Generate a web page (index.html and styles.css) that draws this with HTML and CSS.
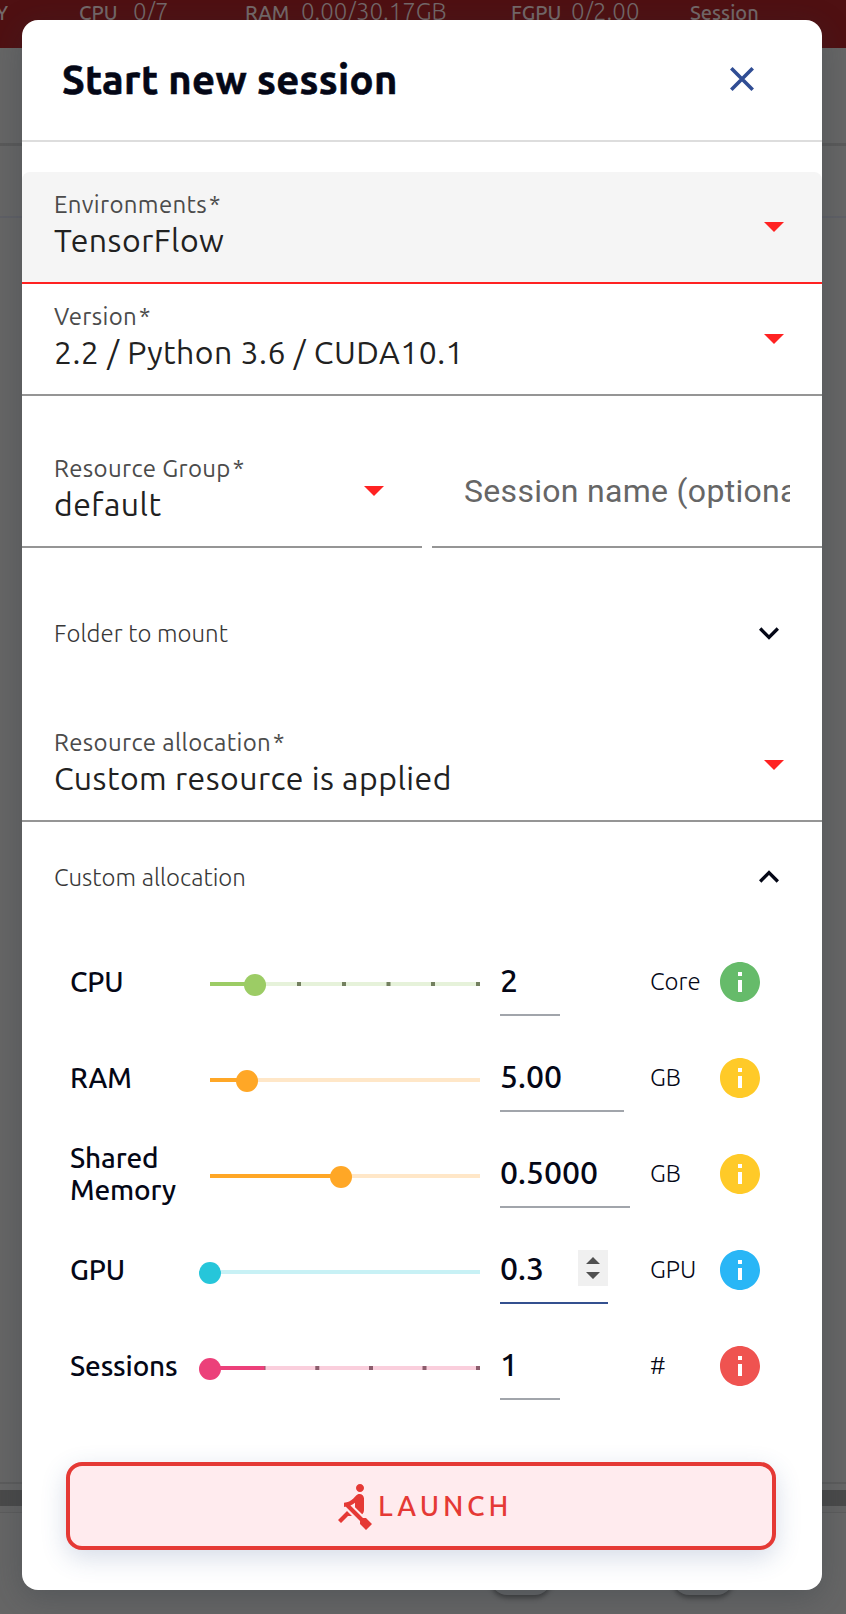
FILE: index.html
```
<!DOCTYPE html>
<html lang="en">
<head>
<meta charset="utf-8">
<title>Start new session</title>
<link rel="stylesheet" href="styles.css">
</head>
<body>
<div class="page">
  <header class="statusbar">
    <span class="stat-name">Y</span>
    <span class="stat-name">CPU</span><span class="stat-value">0/7</span>
    <span class="stat-name">RAM</span><span class="stat-value">0.00/30.17GB</span>
    <span class="stat-name">FGPU</span><span class="stat-value">0/2.00</span>
    <span class="stat-name">Session</span>
  </header>
  <div class="page-tabs"></div>
  <div class="page-head"></div>
  <div class="page-list"></div>
  <div class="page-divider"></div>
  <div class="page-footer"><i></i><i></i></div>
</div>

<main class="dialog">
  <div class="dialog-head">
    <h1>Start new session</h1>
    <svg class="close" viewBox="0 0 24 24"><path d="M1.3 1.3 22.7 22.7M22.7 1.3 1.3 22.7"/></svg>
  </div>

  <section class="fields">
    <div class="field active">
      <div class="field-text"><label>Environments<b>*</b></label><div class="value">TensorFlow</div></div>
      <svg class="caret" viewBox="0 0 20 10"><path d="M0 0h20L10 10z"/></svg>
    </div>
    <div class="field">
      <div class="field-text"><label>Version<b>*</b></label><div class="value">2.2 / Python 3.6 / CUDA10.1</div></div>
      <svg class="caret" viewBox="0 0 20 10"><path d="M0 0h20L10 10z"/></svg>
    </div>
  </section>

  <section class="pair">
    <div class="field">
      <div class="field-text"><label>Resource Group<b>*</b></label><div class="value">default</div></div>
      <svg class="caret" viewBox="0 0 20 10"><path d="M0 0h20L10 10z"/></svg>
    </div>
    <div class="field name-field"><div class="placeholder">Session name (optional)</div></div>
  </section>

  <div class="expander mount"><span>Folder to mount</span>
    <svg viewBox="0 0 24 24"><path d="M16.59 8.59 12 13.17 7.41 8.59 6 10l6 6 6-6z"/></svg></div>

  <div class="field">
    <div class="field-text"><label>Resource allocation<b>*</b></label><div class="value">Custom resource is applied</div></div>
    <svg class="caret" viewBox="0 0 20 10"><path d="M0 0h20L10 10z"/></svg>
  </div>

  <div class="expander custom"><span>Custom allocation</span>
    <svg viewBox="0 0 24 24"><path d="M12 8l-6 6 1.41 1.41L12 10.83l4.59 4.58L18 14z"/></svg></div>

  <section class="rows">
    <div class="row">
      <div class="name">CPU</div>
      <svg class="slider green" viewBox="0 0 292 24"><path class="track" d="M11 11h270"/><path class="fill" d="M11 11h45"/><path class="tick" d="M98 11h4M143 11h4M187.500 11h4M232 11h4M277 11h4"/><circle cx="56" cy="12" r="11"/></svg>
      <div class="amount w60">2</div>
      <div class="unit">Core</div>
      <svg class="info c-green" viewBox="0 0 24 24"><path d="M12 2C6.480 2 2 6.480 2 12s4.480 10 10 10 10-4.480 10-10S17.520 2 12 2zm1 15h-2v-6h2v6zm0-8h-2V7h2v2z"/></svg>
    </div>
    <div class="row">
      <div class="name">RAM</div>
      <svg class="slider orange" viewBox="0 0 292 24"><path class="track" d="M11 11h270"/><path class="fill" d="M11 11h37"/><circle cx="48" cy="12" r="11"/></svg>
      <div class="amount w124">5.00</div>
      <div class="unit">GB</div>
      <svg class="info c-yellow" viewBox="0 0 24 24"><path d="M12 2C6.480 2 2 6.480 2 12s4.480 10 10 10 10-4.480 10-10S17.520 2 12 2zm1 15h-2v-6h2v6zm0-8h-2V7h2v2z"/></svg>
    </div>
    <div class="row">
      <div class="name">Shared Memory</div>
      <svg class="slider orange" viewBox="0 0 292 24"><path class="track" d="M11 11h270"/><path class="fill" d="M11 11h131"/><circle cx="142" cy="12" r="11"/></svg>
      <div class="amount w130">0.5000</div>
      <div class="unit">GB</div>
      <svg class="info c-yellow" viewBox="0 0 24 24"><path d="M12 2C6.480 2 2 6.480 2 12s4.480 10 10 10 10-4.480 10-10S17.520 2 12 2zm1 15h-2v-6h2v6zm0-8h-2V7h2v2z"/></svg>
    </div>
    <div class="row">
      <div class="name">GPU</div>
      <svg class="slider cyan" viewBox="0 0 292 24"><path class="track" d="M11 11h270"/><circle cx="11" cy="12" r="11"/></svg>
      <div class="amount w108 focused"><span>0.3</span>
        <svg class="spinner" viewBox="0 0 30 36"><path d="M8 14l7-7 7 7zM8 22l7 7 7-7z"/></svg></div>
      <div class="unit">GPU</div>
      <svg class="info c-blue" viewBox="0 0 24 24"><path d="M12 2C6.480 2 2 6.480 2 12s4.480 10 10 10 10-4.480 10-10S17.520 2 12 2zm1 15h-2v-6h2v6zm0-8h-2V7h2v2z"/></svg>
    </div>
    <div class="row">
      <div class="name">Sessions</div>
      <svg class="slider pink" viewBox="0 0 292 24"><path class="track" d="M11 11h270"/><path class="tick" d="M62.500 11h4M116.300 11h4M170 11h4M223.500 11h4M277 11h4"/><path class="fill" d="M11 11h54.500"/><circle cx="11" cy="12" r="11"/></svg>
      <div class="amount w60">1</div>
      <div class="unit">#</div>
      <svg class="info c-red" viewBox="0 0 24 24"><path d="M12 2C6.480 2 2 6.480 2 12s4.480 10 10 10 10-4.480 10-10S17.520 2 12 2zm1 15h-2v-6h2v6zm0-8h-2V7h2v2z"/></svg>
    </div>
  </section>

  <button class="launch">
    <svg viewBox="0 0 24 24"><path d="M8.500 14.500L4 19l1.500 1.500L9 17h2l-2.500-2.500zM15 1c-1.100 0-2 .9-2 2s.9 2 2 2 2-.9 2-2-.9-2-2-2zm6 20.010L18 24l-2.990-3.010V19.500l-7.100-7.090c-.31.050-.61.070-.91.070v-2.160c1.660.03 3.610-.87 4.670-2.040l1.400-1.550c.19-.21.43-.38.69-.5.29-.14.62-.23.96-.23h.03C15.990 6.010 17 7.020 17 8.260v5.750c0 .84-.35 1.610-.92 2.160l-3.580-3.580v-2.270c-.63.52-1.430 1.020-2.290 1.390L16.500 18H18l3 3.010z"/></svg>
    <span>LAUNCH</span>
  </button>
</main>
</body>
</html>
```
FILE: styles.css
```
* { box-sizing: border-box; }
body {
  margin: 0;
  height: 1614px;
  position: relative;
  overflow: hidden;
  font-family: Ubuntu, "Noto Sans", sans-serif;
  color: #040716;
}
svg { display: block; flex: none; }

/* Dimmed page behind the dialog */
.page { height: 1614px; display: flex; flex-direction: column; background: #666; }
.statusbar {
  height: 48px;
  flex: none;
  display: grid;
  grid-template-columns: 79px 54px 112px 56px 210px 60px 119px 1fr;
  background: #4f1012;
  color: #746869;
  white-space: nowrap;
  line-height: 28px;
}
.stat-name { font-size: 20px; font-weight: 500; margin-top: -1px; }
.stat-value { font-size: 24px; font-weight: 300; margin-top: -2px; }
.statusbar .stat-name:first-child { margin-left: -4px; }
.page-tabs { height: 98px; flex: none; border-bottom: 3px solid #5a5a5a; }
.page-head { height: 72px; flex: none; border-bottom: 2px solid #5f6066; }
.page-list { flex: 1; border-bottom: 2px solid #5c5c5c; }
.page-divider { height: 28px; flex: none; border-top: 6px solid #666; border-bottom: 6px solid #646464; background: #4a4a4a; }
.page-footer { height: 102px; flex: none; border-top: 1px solid #5c5c5c; display: flex; padding: 50px 0 0 491px; gap: 122px; }
.page-footer i { width: 60px; height: 32px; border-radius: 16px; background: #646566; box-shadow: 0 3px 5px rgba(0,0,0,.4); }

/* Modal */
.dialog {
  position: absolute;
  left: 22px;
  top: 20px;
  width: 800px;
  height: 1570px;
  background: #fff;
  border-radius: 16px;
  box-shadow: 0 8px 32px rgba(40,50,60,.3);
}
.dialog-head {
  height: 122px;
  border-bottom: 2px solid #ddd;
  display: flex;
  align-items: center;
  justify-content: space-between;
  padding: 0 68px 3px 40px;
}
h1 { margin: 2px 0 0; font-size: 40px; font-weight: 700; line-height: 56px; letter-spacing: .35px; white-space: nowrap; -webkit-text-stroke: .6px; }
.close { width: 24px; height: 24px; fill: none; stroke: #304d94; stroke-width: 3.6; }

.fields { padding-top: 30px; }
.field {
  height: 112px;
  border-bottom: 2px solid #959595;
  display: flex;
  align-items: center;
  justify-content: space-between;
  padding: 0 38px 0 32px;
}
.field.active { background: #f5f5f5; border-color: #ff2222; border-radius: 8px 8px 0 0; }
.field-text { align-self: flex-start; padding-top: 16px; white-space: nowrap; }
.field label { display: block; font-size: 24px; line-height: 33px; letter-spacing: .34px; color: #4b4b4b; }
.field label b { font-weight: 400; margin-left: 2px; }
.value { font-size: 32px; line-height: 39px; letter-spacing: .47px; color: #212121; }
.caret { width: 20px; height: 10px; fill: #ff2222; }
.pair { display: grid; grid-template-columns: 400px 390px; gap: 10px; padding-top: 40px; }
.name-field { padding: 0 32px; }
.placeholder { font: 32px/48px Roboto, sans-serif; color: #666; white-space: nowrap; overflow: hidden; letter-spacing: .3px; }

.expander { display: flex; align-items: center; justify-content: space-between; padding: 0 33px 0 32px; font-size: 24px; font-weight: 300; letter-spacing: .05px; color: #383838; }
.expander svg { width: 40px; height: 40px; fill: #040716; }
.mount { height: 162px; align-items: flex-start; padding-top: 65px; line-height: 42px; }
.custom { height: 112px; padding-bottom: 2px; }

/* Allocation rows */
.row { height: 96px; display: grid; grid-template-columns: 129px 292px 151px 65px 48px; align-items: center; padding-left: 48px; }
.name { font-size: 28px; line-height: 32px; font-weight: 500; letter-spacing: -.15px; width: 116px; }
.slider { width: 292px; height: 24px; margin: 5px 0 0 0; }
.slider path { fill: none; stroke-width: 4; }
.green { --main: #9ccc65; --soft: #e6f2da; --dot: #73805f; }
.orange { --main: #ffa726; --soft: #ffe7c8; --dot: #806850; }
.cyan { --main: #26c6da; --soft: #c8f1f5; --dot: #607c80; }
.pink { --main: #ec407a; --soft: #facedc; --dot: #8c5c6c; }
.slider .track { stroke: var(--soft); }
.slider .fill { stroke: var(--main); }
.slider .tick { stroke: var(--dot); }
.slider circle { fill: var(--main); }
.amount {
  margin-left: 9px;
  height: 54px;
  margin-top: 14px;
  border-bottom: 2px solid #a1a5ab;
  font-size: 32px;
  line-height: 36px;
  font-weight: 500;
  display: flex;
  justify-content: space-between;
}
.w60 { width: 60px; }
.w108 { width: 108px; }
.w124 { width: 124px; }
.w130 { width: 130px; }
.focused { border-color: #34508f; }
.spinner { width: 30px; height: 36px; background: #f0f0f0; fill: #505050; }
.unit { font-size: 24px; font-weight: 300; padding-left: 8px; margin-top: -2px; }
.info { width: 48px; height: 48px; margin-left: 9px; }
.c-green { fill: #66bb6a; }
.c-yellow { fill: #ffca28; }
.c-blue { fill: #29b6f6; }
.c-red { fill: #ef5350; }

.launch {
  margin: 48px 0 0 44px;
  width: 710px;
  height: 88px;
  border: 4px solid #e53935;
  border-radius: 16px;
  background: #ffebee;
  color: #e53935;
  display: flex;
  align-items: center;
  justify-content: flex-start;
  padding: 0 0 0 260px;
  font: 500 28px/40px Ubuntu, "Noto Sans", sans-serif;
  letter-spacing: 3.8px;
  box-shadow: 0 8px 26px rgba(50,80,140,.2);
}
.launch svg { width: 48px; height: 48px; fill: currentColor; }
```
